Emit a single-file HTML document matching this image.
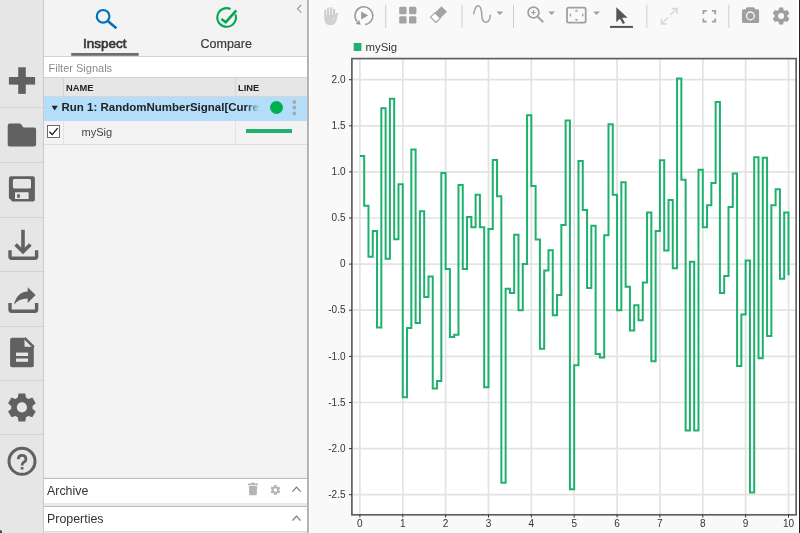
<!DOCTYPE html>
<html><head><meta charset="utf-8">
<style>
*{box-sizing:border-box;margin:0;padding:0}
html,body{width:800px;height:533px;overflow:hidden;background:#f9f9f9;font-family:"Liberation Sans",sans-serif}
.abs{position:absolute}
#side{left:0;top:0;width:44px;height:533px;background:#e6e6e6;border-right:1px solid #cacaca}
.sep{position:absolute;left:0;width:43px;height:1px;background:#d3d3d3}
#panel{left:44px;top:0;width:265px;height:533px;background:#f3f3f3;border-right:2px solid #b3b3b3}
#shadow{left:309px;top:0;width:1px;height:533px;background:#fff}
.tabtxt{position:absolute;font-size:13px;color:#333;white-space:nowrap}
#filter{left:44px;top:56px;width:263px;height:21.5px;background:#fff;border-top:1px solid #d2d2d2;border-bottom:1.5px solid #d2d2d2}
#filter span{position:absolute;left:4.5px;top:5px;font-size:11px;color:#8c8c8c}
#thead{left:44px;top:78px;width:263px;height:19px;background:#e6e6e6;border-bottom:1px solid #d6d6d6}
.th{position:absolute;top:4.7px;font-size:9.3px;font-weight:bold;color:#222}
#run{left:44px;top:97px;width:263px;height:24px;background:#b4ddfa}
#sig{left:44px;top:121px;width:263px;height:24px;background:#f3f3f3;border-bottom:1px solid #dcdcdc}
.acc{position:absolute;left:44px;width:263px;background:#fff}
.acctxt{position:absolute;left:3px;font-size:12.4px;color:#333}
#plotsvg{left:0;top:0}
svg text{font-family:"Liberation Sans",sans-serif}
#root{position:absolute;left:0;top:0;width:800px;height:533px;will-change:transform;background:#f9f9f9}
</style></head><body><div id="root">

<!-- sidebar -->
<div id="side" class="abs"></div>
<div class="sep" style="top:107px"></div>
<div class="sep" style="top:162px"></div>
<div class="sep" style="top:217px"></div>
<div class="sep" style="top:271px"></div>
<div class="sep" style="top:326px"></div>
<div class="sep" style="top:380px"></div>
<div class="sep" style="top:434px"></div>

<svg class="abs" style="left:0;top:0" width="44" height="533" viewBox="0 0 44 533">
 <g fill="#616161">
  <!-- plus -->
  <rect x="18.2" y="67.3" width="7.6" height="26.6"/>
  <rect x="8.9" y="77" width="26.2" height="7.6"/>
  <!-- folder -->
  <path d="M9.7 123.6 H19.6 Q20.4 123.6 21 124.2 L23.5 127.4 H34.1 Q36.1 127.4 36.1 129.4 V144.6 Q36.1 146.6 34.1 146.6 H9.7 Q7.7 146.6 7.7 144.6 V125.6 Q7.7 123.6 9.7 123.6 Z"/>
  <!-- floppy -->
  <path fill-rule="evenodd" d="M10.9 176.3 H32.9 Q34.9 176.3 34.9 178.3 V199.6 Q34.9 201.6 32.9 201.6 H12.4 L8.9 198.1 V178.3 Q8.9 176.3 10.9 176.3 Z M14.4 179 H29.5 Q31 179 31 180.5 V187 Q31 188.5 29.5 188.5 H14.4 Q12.9 188.5 12.9 187 V180.5 Q12.9 179 14.4 179 Z M15 192.2 H28.6 V199 H15 Z"/>
  <rect x="17.2" y="194.3" width="2.7" height="3.5"/>
  <!-- document -->
  <path d="M12.1 337.8 H24.5 L33.8 347.1 V365.2 Q33.8 367.2 31.8 367.2 H12.1 Q10.1 367.2 10.1 365.2 V339.8 Q10.1 337.8 12.1 337.8 Z"/>
  <!-- share arrow -->
  <path d="M14 304.5 Q17 292 27.7 291.5 V287.2 L35.6 295 L27.7 303.1 V298.5 Q19 298.5 14 304.5 Z"/>
  <!-- gear -->
  <path fill-rule="evenodd" d="M17.80 397.50 L18.50 393.40 L25.30 393.40 L26.00 397.50 L28.42 398.90 L32.32 397.46 L35.72 403.34 L32.52 406.00 L32.52 408.80 L35.72 411.46 L32.32 417.34 L28.42 415.90 L26.00 417.30 L25.30 421.40 L18.50 421.40 L17.80 417.30 L15.38 415.90 L11.48 417.34 L8.08 411.46 L11.28 408.80 L11.28 406.00 L8.08 403.34 L11.48 397.46 L15.38 398.90 Z M27.00 407.40 A5.10 5.10 0 1 0 16.80 407.40 A5.10 5.10 0 1 0 27.00 407.40 Z"/>
 </g>
 <g fill="none" stroke="#616161">
  <!-- download -->
  <path d="M10 250.2 V256.5 Q10 258.2 11.7 258.2 H34.9 Q36.6 258.2 36.6 256.5 V250.2" stroke-width="3.4"/>
  <path d="M23 229.8 V250.5" stroke-width="3.6"/>
  <path d="M15.6 244.4 L23 251.8 L30.4 244.4" stroke-width="3.6"/>
  <!-- share tray -->
  <path d="M10 303.1 V309.5 Q10 311.3 11.8 311.3 H34.8 Q36.6 311.3 36.6 309.5 V303.1" stroke-width="3.4"/>
  <!-- help -->
  <circle cx="22" cy="461.3" r="13" stroke-width="3"/>
 </g>
 <g fill="#e6e6e6">
  <path d="M24.5 337.8 V346.8 H33.8 Z" fill="#e6e6e6"/>
  <rect x="16" y="352.6" width="12.1" height="3.4"/>
  <rect x="16" y="358.5" width="12.1" height="3.3"/>
 </g>
 <path d="M24.5 337.8 L33.8 347.1" stroke="#616161" stroke-width="2.5" fill="none"/>
 <path d="M18.3 459.3 Q18.3 455.4 22.1 455.4 Q25.9 455.4 25.9 458.9 Q25.9 461.2 23.7 462.3 Q22.1 463.1 22.1 465.6" fill="none" stroke="#616161" stroke-width="2.7"/><rect x="20.75" y="467" width="2.7" height="2.5" fill="#616161"/>
</svg>

<!-- left panel -->
<div id="panel" class="abs"></div>
<div id="shadow" class="abs"></div>
<svg class="abs" style="left:44px;top:0" width="264" height="56" viewBox="44 0 264 56">
 <g fill="none" stroke="#0072bd" stroke-width="2.2">
  <circle cx="103.1" cy="16.3" r="6.3"/>
  <path d="M107.8 21 L116.4 28.2" stroke-width="2.6"/>
 </g>
 <g fill="none" stroke="#00a84f" stroke-width="2.1">
  <path d="M235.34 14.32 A9.3 9.3 0 1 1 230.53 9.07"/>
  <path d="M221.4 19 L225.8 22.2 L236.3 10.4" stroke-width="2.5"/>
 </g>
 <path d="M301.2 5 L297.5 8.8 L301.2 12.6" fill="none" stroke="#9a9a9a" stroke-width="1.1"/>
 <rect x="71.2" y="53" width="67.5" height="2.8" fill="#6e6e6e"/>
</svg>
<div class="tabtxt" style="left:83px;top:35.7px;font-size:13.5px;-webkit-text-stroke:0.6px #333;color:#333">Inspect</div>
<div class="tabtxt" style="left:200.5px;top:37px;font-size:12.5px;color:#3a3a3a;-webkit-text-stroke:0.2px #3a3a3a">Compare</div>

<div id="filter" class="abs"><span>Filter Signals</span></div>
<div id="thead" class="abs">
 <div class="abs" style="left:19px;top:0;width:1px;height:19px;background:#d4d4d4"></div>
 <div class="abs" style="left:191px;top:0;width:1px;height:19px;background:#d4d4d4"></div>
 <div class="th" style="left:22px">NAME</div>
 <div class="th" style="left:194px">LINE</div>
</div>
<div id="run" class="abs">
 <svg class="abs" style="left:0;top:0" width="30" height="24"><path d="M7.6 8.8 H13.8 L10.7 13.4 Z" fill="#222"/></svg>
 <div class="abs" style="left:17.5px;top:4px;width:200px;overflow:hidden;white-space:nowrap;font-size:11.5px;font-weight:bold;color:#222;-webkit-mask-image:linear-gradient(to right,#000 183px,rgba(0,0,0,0) 198px)">Run 1: RandomNumberSignal[Current]</div>
 <div class="abs" style="left:226px;top:4px;width:13.2px;height:13.2px;border-radius:50%;background:#00b050"></div>
 <svg class="abs" style="left:240px;top:0" width="20" height="24"><g fill="#a9a9a9"><circle cx="10.4" cy="4.9" r="1.9"/><circle cx="10.4" cy="10.5" r="1.9"/><circle cx="10.4" cy="16.4" r="1.9"/></g></svg>
</div>
<div id="sig" class="abs">
 <div class="abs" style="left:19px;top:0;width:1px;height:23px;background:#e2e2e2"></div>
 <div class="abs" style="left:191px;top:0;width:1px;height:23px;background:#e2e2e2"></div>
 <div class="abs" style="left:3px;top:4px;width:13px;height:13px;background:#fff;border:1px solid #6a6a6a"></div>
 <svg class="abs" style="left:3px;top:4px" width="13" height="13"><path d="M2.5 6.8 L5.2 9.6 L10.6 3.2" fill="none" stroke="#111" stroke-width="1.3"/></svg>
 <div class="abs" style="left:37.5px;top:5px;font-size:11px;color:#444">mySig</div>
 <div class="abs" style="left:202px;top:8.2px;width:46px;height:3.5px;background:#22b06e"></div>
</div>

<!-- accordions -->
<div class="abs" style="left:44px;top:477px;width:263px;height:56px;background:#e9e9e9"></div>
<div class="acc" style="top:478px;height:24.5px;border-top:1.5px solid #bdbdbd">
 <div class="acctxt" style="top:5px">Archive</div>
</div>
<div class="acc" style="top:506px;height:26px;border-top:1.5px solid #bdbdbd;border-bottom:1px solid #dcdcdc">
 <div class="acctxt" style="top:5px">Properties</div>
</div>
<svg class="abs" style="left:240px;top:476px" width="68" height="57" viewBox="240 476 68 57">
 <g fill="#b4b4b4">
  <rect x="248" y="483.6" width="10" height="1.7" rx="0.6"/>
  <rect x="251.4" y="482.4" width="3.2" height="1.6" rx="0.4"/>
  <path d="M248.9 486 H257.1 L256.8 494.6 Q256.7 495.3 256 495.3 H250 Q249.3 495.3 249.2 494.6 Z"/>
 </g>
 <path fill="#b4b4b4" fill-rule="evenodd" d="M273.96 486.54 L274.21 485.10 L276.59 485.10 L276.83 486.54 L277.68 487.02 L279.05 486.52 L280.24 488.58 L279.12 489.51 L279.12 490.49 L280.24 491.42 L279.05 493.48 L277.68 492.98 L276.83 493.46 L276.59 494.90 L274.21 494.90 L273.96 493.46 L273.12 492.98 L271.75 493.48 L270.56 491.42 L271.68 490.49 L271.68 489.51 L270.56 488.58 L271.75 486.52 L273.12 487.02 Z M277.20 490.00 A1.80 1.80 0 1 0 273.60 490.00 A1.80 1.80 0 1 0 277.20 490.00 Z"/>
 <g fill="none" stroke="#777" stroke-width="1.2">
  <path d="M292.4 491.6 L296.5 487.2 L300.6 491.6"/>
  <path d="M292.4 520.6 L296.5 516.2 L300.6 520.6"/>
 </g>
</svg>

<!-- plot panel -->
<svg id="plotsvg" class="abs" width="800" height="533" viewBox="0 0 800 533">
 <!-- toolbar -->
 <g id="toolbar">
  <!-- hand -->
  <g fill="#d0d0d0">
   <rect x="324.3" y="9.6" width="2" height="9" rx="1"/>
   <rect x="327" y="7.3" width="2.2" height="10" rx="1.1"/>
   <rect x="330" y="6.9" width="2.3" height="10" rx="1.15"/>
   <rect x="333" y="8.8" width="2.2" height="9" rx="1.1"/>
   <path d="M324.3 15 H335.2 V14.6 L336.2 12.8 Q337 12 337.8 12.9 L337 18.5 Q336 25.3 330.6 25.3 Q324.3 25.3 324.3 18.5 Z"/>
  </g>
  <path d="M332.2 20.4 L334.4 18.6" stroke="#f9f9f9" stroke-width="0.8"/>
  <!-- replay -->
  <path d="M365.1 24.5 A8.9 8.9 0 1 0 357.2 21.6" fill="none" stroke="#9a9a9a" stroke-width="1.5"/>
  <path d="M355.6 23.9 L360.7 24.8 L359.2 19.9 Z" fill="#9a9a9a"/>
  <path d="M361.1 11.6 L368.2 15.5 L361.1 19.4 Z" fill="#9a9a9a"/>
  <rect x="385.2" y="4.7" width="1" height="23.3" fill="#cdcdcd"/>
  <!-- grid 4 squares -->
  <g fill="#a3a3a3">
   <rect x="399.2" y="6.8" width="7.4" height="7.4" rx="1.3"/>
   <rect x="409" y="6.8" width="7.4" height="7.4" rx="1.3"/>
   <rect x="399.2" y="16.2" width="7.4" height="7.4" rx="1.3"/>
   <rect x="409" y="16.2" width="7.4" height="7.4" rx="1.3"/>
  </g>
  <!-- eraser -->
  <path d="M441.5 6.3 L447 11.7 L440.3 18.2 L434.9 12.8 Z" fill="#a3a3a3"/>
  <path d="M434.9 12.8 L440.3 18.2 L435.9 22.5 L430.5 17.2 Z" fill="#fff" stroke="#a3a3a3" stroke-width="1.1" stroke-linejoin="round"/>
  <rect x="461.5" y="4.7" width="1" height="23.3" fill="#cdcdcd"/>
  <!-- sine -->
  <path d="M473.6 14.2 C475 7.5 476.5 5.7 478 5.7 C481 5.7 481.6 10.5 481.8 15 C482 20.5 484 22.3 486 22.3 C488.4 22.3 490 18.5 490.4 14.6" fill="none" stroke="#a0a0a0" stroke-width="1.5"/>
  <path d="M496.5 11.5 H503.2 L499.85 15 Z" fill="#a0a0a0"/>
  <rect x="513" y="4.7" width="1" height="23.3" fill="#cdcdcd"/>
  <!-- zoom in -->
  <circle cx="533.5" cy="12.5" r="5.4" fill="none" stroke="#a0a0a0" stroke-width="1.7"/>
  <path d="M537.6 16.6 L543.3 22.3" stroke="#a0a0a0" stroke-width="2" fill="none"/>
  <path d="M533.5 10.1 V14.9 M531.1 12.5 H535.9" stroke="#a0a0a0" stroke-width="1.2"/>
  <path d="M548.3 11.5 H555 L551.65 15 Z" fill="#a0a0a0"/>
  <!-- fit -->
  <rect x="567" y="7.6" width="18.7" height="15" rx="1.6" fill="none" stroke="#a0a0a0" stroke-width="1.8"/>
  <g fill="#a0a0a0">
   <path d="M576.4 9.4 L578.2 11.4 H574.6 Z"/>
   <path d="M576.4 20.9 L578.2 18.9 H574.6 Z"/>
   <path d="M569.2 15.1 L571.1 13.3 V16.9 Z"/>
   <path d="M583.9 15.1 L582 13.3 V16.9 Z"/>
  </g>
  <path d="M593.2 11.5 H599.9 L596.55 15 Z" fill="#a0a0a0"/>
  <!-- cursor -->
  <path d="M616.3 7.2 V22.3 L619.9 18.7 L622.9 23.9 L625 22.9 L622.1 17.8 H627.6 Z" fill="#555"/>
  <rect x="610" y="25.9" width="23" height="2" fill="#555"/>
  <rect x="646.3" y="4.7" width="1" height="23" fill="#cdcdcd"/>
  <!-- expand -->
  <g fill="none" stroke="#d6d6d6" stroke-width="1.4">
   <path d="M661.5 24 L668 17.5 M661.5 18.8 V24 H666.7"/>
   <path d="M677 8.5 L670.5 15 M671.8 8.5 H677 V13.7"/>
  </g>
  <!-- fullscreen corners -->
  <g fill="none" stroke="#a0a0a0" stroke-width="1.8">
   <path d="M703.4 14.2 V10.9 H706.7"/>
   <path d="M711.9 10.9 H715.2 V14.2"/>
   <path d="M703.4 18.4 V21.7 H706.7"/>
   <path d="M711.9 21.7 H715.2 V18.4"/>
  </g>
  <rect x="728.3" y="4.7" width="1" height="23" fill="#cdcdcd"/>
  <!-- camera -->
  <path fill="#a0a0a0" d="M747.3 7.2 H753.3 Q754.1 7.2 754.5 7.9 L755.3 9.2 H757.6 Q759.1 9.2 759.1 10.7 V21.4 Q759.1 22.9 757.6 22.9 H743.5 Q742 22.9 742 21.4 V10.7 Q742 9.2 743.5 9.2 H745.8 L746.2 7.9 Q746.5 7.2 747.3 7.2 Z"/>
  <circle cx="750.4" cy="15.9" r="3.9" fill="none" stroke="#f9f9f9" stroke-width="1.3"/>
  <!-- gear -->
  <path fill="#a0a0a0" fill-rule="evenodd" d="M778.62 10.02 L779.05 7.54 L783.15 7.54 L783.58 10.02 L785.04 10.87 L787.40 9.99 L789.45 13.55 L787.52 15.15 L787.52 16.85 L789.45 18.45 L787.40 22.01 L785.04 21.13 L783.58 21.98 L783.15 24.46 L779.05 24.46 L778.62 21.98 L777.16 21.13 L774.80 22.01 L772.75 18.45 L774.68 16.85 L774.68 15.15 L772.75 13.55 L774.80 9.99 L777.16 10.87 Z M784.10 16.00 A3.00 3.00 0 1 0 778.10 16.00 A3.00 3.00 0 1 0 784.10 16.00 Z"/>
 </g>

 <!-- legend -->
 <rect x="353.7" y="43" width="7.7" height="8" fill="#22b06e"/>
 <text x="365.5" y="51.2" font-size="11.4" fill="#333">mySig</text>

 <!-- axes -->
 <rect x="352.5" y="58.5" width="444" height="456" fill="#fff"/>
 <g stroke="#e3e3e4" stroke-width="1.7"><line x1="359.9" y1="59" x2="359.9" y2="514" /><line x1="402.8" y1="59" x2="402.8" y2="514" /><line x1="445.6" y1="59" x2="445.6" y2="514" /><line x1="488.5" y1="59" x2="488.5" y2="514" /><line x1="531.3" y1="59" x2="531.3" y2="514" /><line x1="574.2" y1="59" x2="574.2" y2="514" /><line x1="617.1" y1="59" x2="617.1" y2="514" /><line x1="659.9" y1="59" x2="659.9" y2="514" /><line x1="702.8" y1="59" x2="702.8" y2="514" /><line x1="745.6" y1="59" x2="745.6" y2="514" /><line x1="788.5" y1="59" x2="788.5" y2="514" /><line x1="353" y1="494.7" x2="796" y2="494.7" /><line x1="353" y1="448.6" x2="796" y2="448.6" /><line x1="353" y1="402.5" x2="796" y2="402.5" /><line x1="353" y1="356.4" x2="796" y2="356.4" /><line x1="353" y1="310.2" x2="796" y2="310.2" /><line x1="353" y1="264.1" x2="796" y2="264.1" /><line x1="353" y1="218.0" x2="796" y2="218.0" /><line x1="353" y1="171.9" x2="796" y2="171.9" /><line x1="353" y1="125.8" x2="796" y2="125.8" /><line x1="353" y1="79.7" x2="796" y2="79.7" /></g>
 <path d="M359.90 156.02 H364.19 V205.83 H368.47 V256.66 H372.76 V231.02 H377.04 V327.59 H381.33 V108.24 H385.62 V258.78 H389.90 V98.65 H394.19 V239.32 H398.47 V184.34 H402.76 V397.14 H407.05 V328.05 H411.33 V149.57 H415.62 V323.07 H419.90 V211.18 H424.19 V296.97 H428.48 V276.40 H432.76 V388.38 H437.05 V381.00 H441.33 V173.09 H445.62 V269.11 H449.91 V337.09 H454.19 V334.69 H458.48 V185.08 H462.76 V269.11 H467.05 V217.00 H471.34 V227.33 H475.62 V194.67 H479.91 V227.33 H484.19 V387.18 H488.48 V228.99 H492.77 V159.90 H497.05 V196.33 H501.34 V482.74 H505.62 V288.67 H509.91 V293.00 H514.20 V234.80 H518.48 V310.34 H522.77 V263.95 H527.05 V115.25 H531.34 V185.91 H535.63 V239.50 H539.91 V348.71 H544.20 V270.49 H548.48 V250.29 H552.77 V315.14 H557.06 V295.03 H561.34 V225.11 H565.63 V120.60 H569.91 V489.20 H574.20 V365.23 H578.49 V161.10 H582.77 V209.99 H587.06 V287.93 H591.34 V225.67 H595.63 V354.06 H599.92 V357.38 H604.20 V235.17 H608.49 V124.29 H612.77 V194.67 H617.06 V310.25 H621.35 V182.22 H625.63 V286.64 H629.92 V330.54 H634.20 V305.27 H638.49 V320.21 H642.78 V282.58 H647.06 V212.38 H651.35 V361.17 H655.63 V231.02 H659.92 V160.27 H664.21 V250.48 H668.49 V200.02 H672.78 V268.28 H677.06 V78.45 H681.35 V179.73 H685.64 V430.62 H689.92 V261.64 H694.21 V430.62 H698.49 V169.86 H702.78 V227.33 H707.07 V205.37 H711.35 V183.05 H715.64 V101.97 H719.92 V292.91 H724.21 V275.94 H728.50 V207.03 H732.78 V173.55 H737.07 V366.06 H741.35 V314.40 H745.64 V260.44 H749.93 V492.42 H754.21 V157.13 H758.50 V358.21 H762.78 V157.87 H767.07 V335.89 H771.36 V205.37 H775.64 V189.23 H779.93 V278.70 H784.21 V212.38 H788.50 V275.20" fill="none" stroke="#1eb16d" stroke-width="2" stroke-linejoin="miter"/>
 <rect x="351.9" y="58.6" width="444.3" height="456.2" fill="none" stroke="#606060" stroke-width="1.7"/>
 <g stroke="#333" stroke-width="1"><line x1="359.9" y1="514.5" x2="359.9" y2="517.5" /><line x1="402.8" y1="514.5" x2="402.8" y2="517.5" /><line x1="445.6" y1="514.5" x2="445.6" y2="517.5" /><line x1="488.5" y1="514.5" x2="488.5" y2="517.5" /><line x1="531.3" y1="514.5" x2="531.3" y2="517.5" /><line x1="574.2" y1="514.5" x2="574.2" y2="517.5" /><line x1="617.1" y1="514.5" x2="617.1" y2="517.5" /><line x1="659.9" y1="514.5" x2="659.9" y2="517.5" /><line x1="702.8" y1="514.5" x2="702.8" y2="517.5" /><line x1="745.6" y1="514.5" x2="745.6" y2="517.5" /><line x1="788.5" y1="514.5" x2="788.5" y2="517.5" /><line x1="349" y1="494.7" x2="352" y2="494.7" /><line x1="349" y1="448.6" x2="352" y2="448.6" /><line x1="349" y1="402.5" x2="352" y2="402.5" /><line x1="349" y1="356.4" x2="352" y2="356.4" /><line x1="349" y1="310.2" x2="352" y2="310.2" /><line x1="349" y1="264.1" x2="352" y2="264.1" /><line x1="349" y1="218.0" x2="352" y2="218.0" /><line x1="349" y1="171.9" x2="352" y2="171.9" /><line x1="349" y1="125.8" x2="352" y2="125.8" /><line x1="349" y1="79.7" x2="352" y2="79.7" /></g>
 <g font-size="10" fill="#333"><text x="359.9" y="527.2" text-anchor="middle">0</text><text x="402.8" y="527.2" text-anchor="middle">1</text><text x="445.6" y="527.2" text-anchor="middle">2</text><text x="488.5" y="527.2" text-anchor="middle">3</text><text x="531.3" y="527.2" text-anchor="middle">4</text><text x="574.2" y="527.2" text-anchor="middle">5</text><text x="617.1" y="527.2" text-anchor="middle">6</text><text x="659.9" y="527.2" text-anchor="middle">7</text><text x="702.8" y="527.2" text-anchor="middle">8</text><text x="745.6" y="527.2" text-anchor="middle">9</text><text x="788.5" y="527.2" text-anchor="middle">10</text><text x="345.5" y="497.8" text-anchor="end">-2.5</text><text x="345.5" y="451.7" text-anchor="end">-2.0</text><text x="345.5" y="405.6" text-anchor="end">-1.5</text><text x="345.5" y="359.5" text-anchor="end">-1.0</text><text x="345.5" y="313.4" text-anchor="end">-0.5</text><text x="345.5" y="267.2" text-anchor="end">0</text><text x="345.5" y="221.1" text-anchor="end">0.5</text><text x="345.5" y="175.0" text-anchor="end">1.0</text><text x="345.5" y="128.9" text-anchor="end">1.5</text><text x="345.5" y="82.8" text-anchor="end">2.0</text></g>
</svg>

<!-- right edge -->
<div class="abs" style="left:797px;top:0;width:2px;height:533px;background:#fff"></div>
<div class="abs" style="left:799px;top:0;width:1px;height:533px;background:#222"></div>
<div class="abs" style="left:0;top:530px;width:2px;height:3px;background:#444;border-top-right-radius:2px"></div>
</div></body></html>
